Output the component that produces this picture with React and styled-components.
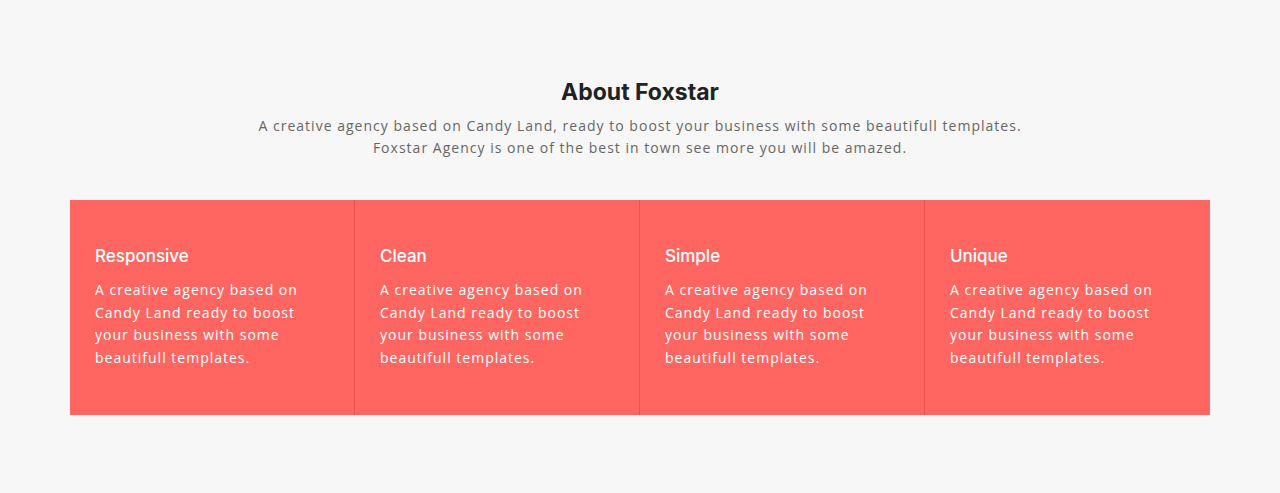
import React from "react";
import styled, { createGlobalStyle } from "styled-components";

const GlobalStyle = createGlobalStyle`
  html, body {
    margin: 0;
    padding: 0;
    background: #f7f7f7;
  }
  body {
    font-family: "Open Sans", "Liberation Sans", sans-serif;
  }
`;

const features = [
  { title: "Responsive" },
  { title: "Clean" },
  { title: "Simple" },
  { title: "Unique" },
];

const text =
  "A creative agency based on Candy Land ready to boost your business with some beautifull templates.";

const App = () => {
  return (
    <Wrapper>
      <GlobalStyle />
      <Header>
        <h2>About Foxstar</h2>
        <p>
          A creative agency based on Candy Land, ready to boost your business
          with some beautifull templates.
          <br />
          Foxstar Agency is one of the best in town see more you will be
          amazed.
        </p>
      </Header>
      <Grid>
        {features.map((f, i) => (
          <Card key={f.title} last={i === features.length - 1}>
            <h3>{f.title}</h3>
            <p>{text}</p>
          </Card>
        ))}
      </Grid>
    </Wrapper>
  );
};

const Wrapper = styled.section`
  width: 1140px;
  margin: 0 auto;
  padding: 79px 0 79px;
`;

const Header = styled.div`
  text-align: center;
  h2 {
    margin: 0;
    font-family: "Inter", "Liberation Sans", sans-serif;
    font-weight: 700;
    font-size: 23px;
    line-height: 26px;
    letter-spacing: 0;
    color: #222;
  }
  p {
    margin: 10px 0 0;
    font-size: 14px;
    line-height: 22px;
    letter-spacing: 1.02px;
    color: #666;
  }
`;

const Grid = styled.div`
  margin-top: 41px;
  display: grid;
  grid-template-columns: repeat(4, 1fr);
  background: #ff6661;
`;

const Card = styled.div`
  padding: 45px 25px 45px;
  border-right: 1px solid ${({ last }) => (last ? "transparent" : "#f0514d")};
  color: #fff;
  h3 {
    margin: 0;
    font-family: "Inter", "Liberation Sans", sans-serif;
    font-weight: 500;
    font-size: 17px;
    line-height: 22px;
  }
  p {
    margin: 12px 0 0;
    max-width: 225px;
    font-size: 14px;
    line-height: 22.7px;
    letter-spacing: 1px;
  }
`;

export default App;
